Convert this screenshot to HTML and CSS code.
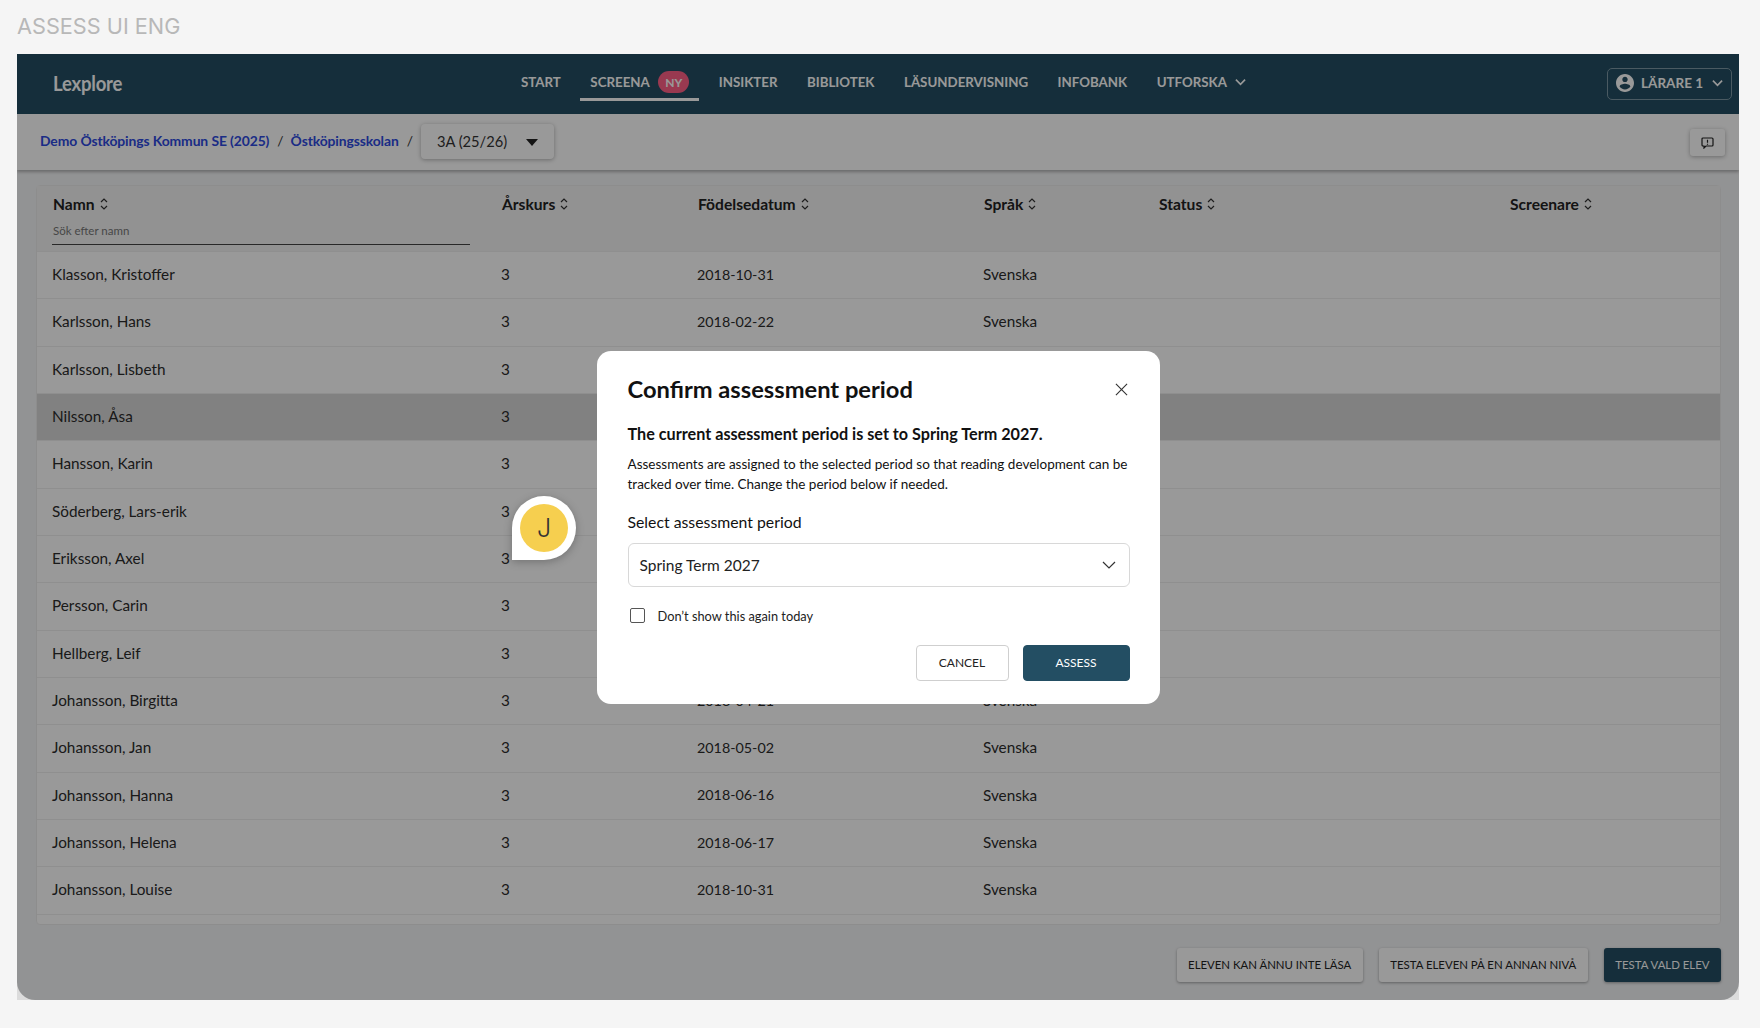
FILE: index.html
```html
<!DOCTYPE html>
<html lang="sv">
<head>
<meta charset="utf-8">
<title>Assess UI Eng</title>
<link rel="stylesheet" href="styles.css">
</head>
<body>
<header class="page-title">ASSESS UI ENG</header>
<div class="frame">
  <div class="app">
    <nav class="topbar">
      <div class="logo">Lexplore</div>
      <ul class="tabs">
        <li class="tab">START</li>
        <li class="tab tab-active">SCREENA <span class="badge">NY</span></li>
        <li class="tab">INSIKTER</li>
        <li class="tab">BIBLIOTEK</li>
        <li class="tab">LÄSUNDERVISNING</li>
        <li class="tab">INFOBANK</li>
        <li class="tab">UTFORSKA
          <svg class="tab-chev" viewBox="0 0 12 8"><path d="M1 1.5l5 5 5-5"/></svg>
        </li>
      </ul>
      <div class="user">
        <svg class="user-ic" viewBox="2 2 20 20"><path d="M12 2C6.48 2 2 6.48 2 12s4.48 10 10 10 10-4.48 10-10S17.52 2 12 2zm0 3c1.66 0 3 1.34 3 3s-1.34 3-3 3-3-1.34-3-3 1.34-3 3-3zm0 14.2c-2.5 0-4.71-1.28-6-3.22.03-1.99 4-3.08 6-3.08 1.99 0 5.97 1.09 6 3.08-1.29 1.94-3.5 3.22-6 3.22z"/></svg>
        <span>LÄRARE 1</span>
        <svg class="tab-chev" viewBox="0 0 12 8"><path d="M1 1.5l5 5 5-5"/></svg>
      </div>
    </nav>
    <div class="crumbs">
      <a class="crumb">Demo Östköpings Kommun SE (2025)</a>
      <span class="sep">/</span>
      <a class="crumb">Östköpingsskolan</a>
      <span class="sep">/</span>
      <div class="class-select"><span>3A (25/26)</span><i class="caret"></i></div>
      <button class="feedback">
        <svg viewBox="0 0 13 12"><path d="M2 1h9a1 1 0 0 1 1 1v6a1 1 0 0 1-1 1H5l-2 2V9H2a1 1 0 0 1-1-1V2a1 1 0 0 1 1-1z"/><path d="M6.5 2.8v3M6.5 6.7v1"/></svg>
      </button>
    </div>
    <main class="content">
      <section class="table">
        <div class="thead row-grid">
          <div class="th">
            <span class="th-label">Namn <svg class="sort" viewBox="0 0 8 14"><path d="M1 5l3-3 3 3M1 9l3 3 3-3"/></svg></span>
            <div class="search">Sök efter namn</div>
          </div>
          <div class="th"><span class="th-label">Årskurs <svg class="sort" viewBox="0 0 8 14"><path d="M1 5l3-3 3 3M1 9l3 3 3-3"/></svg></span></div>
          <div class="th"><span class="th-label">Födelsedatum <svg class="sort" viewBox="0 0 8 14"><path d="M1 5l3-3 3 3M1 9l3 3 3-3"/></svg></span></div>
          <div class="th"><span class="th-label">Språk <svg class="sort" viewBox="0 0 8 14"><path d="M1 5l3-3 3 3M1 9l3 3 3-3"/></svg></span></div>
          <div class="th"><span class="th-label">Status <svg class="sort" viewBox="0 0 8 14"><path d="M1 5l3-3 3 3M1 9l3 3 3-3"/></svg></span></div>
          <div class="th"><span class="th-label">Screenare <svg class="sort" viewBox="0 0 8 14"><path d="M1 5l3-3 3 3M1 9l3 3 3-3"/></svg></span></div>
        </div>
        <div class="tr row-grid"><div>Klasson, Kristoffer</div><div>3</div><div class="td-date">2018-10-31</div><div>Svenska</div></div>
        <div class="tr row-grid"><div>Karlsson, Hans</div><div>3</div><div class="td-date">2018-02-22</div><div>Svenska</div></div>
        <div class="tr row-grid"><div>Karlsson, Lisbeth</div><div>3</div><div></div><div></div></div>
        <div class="tr row-grid tr-selected"><div>Nilsson, Åsa</div><div>3</div><div></div><div></div></div>
        <div class="tr row-grid"><div>Hansson, Karin</div><div>3</div><div></div><div></div></div>
        <div class="tr row-grid"><div>Söderberg, Lars-erik</div><div>3</div><div></div><div></div></div>
        <div class="tr row-grid"><div>Eriksson, Axel</div><div>3</div><div></div><div></div></div>
        <div class="tr row-grid"><div>Persson, Carin</div><div>3</div><div></div><div></div></div>
        <div class="tr row-grid"><div>Hellberg, Leif</div><div>3</div><div></div><div></div></div>
        <div class="tr row-grid"><div>Johansson, Birgitta</div><div>3</div><div class="td-date">2018-04-21</div><div>Svenska</div></div>
        <div class="tr row-grid"><div>Johansson, Jan</div><div>3</div><div class="td-date">2018-05-02</div><div>Svenska</div></div>
        <div class="tr row-grid"><div>Johansson, Hanna</div><div>3</div><div class="td-date">2018-06-16</div><div>Svenska</div></div>
        <div class="tr row-grid"><div>Johansson, Helena</div><div>3</div><div class="td-date">2018-06-17</div><div>Svenska</div></div>
        <div class="tr row-grid"><div>Johansson, Louise</div><div>3</div><div class="td-date">2018-10-31</div><div>Svenska</div></div>
        <div class="tfoot"></div>
      </section>
      <div class="actions">
        <button class="act">ELEVEN KAN ÄNNU INTE LÄSA</button>
        <button class="act">TESTA ELEVEN PÅ EN ANNAN NIVÅ</button>
        <button class="act act-primary">TESTA VALD ELEV</button>
      </div>
    </main>
    <div class="backdrop">
      <div class="pin"><span class="pin-dot">J</span></div>
      <div class="modal">
        <div class="modal-head">
          <h2>Confirm assessment period</h2>
          <svg class="close" viewBox="0 0 14 14"><path d="M1 1l12 12M13 1L1 13"/></svg>
        </div>
        <p class="lead">The current assessment period is set to Spring Term 2027.</p>
        <p class="desc">Assessments are assigned to the selected period so that reading development can be tracked over time. Change the period below if needed.</p>
        <div class="field-label">Select assessment period</div>
        <div class="select">
          <span>Spring Term 2027</span>
          <svg viewBox="0 0 14 8"><path d="M1 1l6 6 6-6"/></svg>
        </div>
        <label class="check"><i class="box"></i><span>Don’t show this again today</span></label>
        <div class="modal-actions">
          <button class="btn">CANCEL</button>
          <button class="btn btn-primary">ASSESS</button>
        </div>
      </div>
    </div>
  </div>
</div>
</body>
</html>
```
FILE: styles.css
```css
* { box-sizing: border-box; }
html, body { margin: 0; padding: 0; }
body {
  background: #f5f5f5;
  font-family: "Lato", "Liberation Sans", sans-serif;
  color: #222;
  height: 1028px;
  overflow: hidden;
}
.page-title {
  height: 54px;
  padding: 14px 0 0 17px;
  font-size: 21.7px;
  line-height: 24px;
  color: #b8b8b8;
  font-family: "Inter", "Liberation Sans", sans-serif;
  font-weight: 400;
}
.frame {
  width: 1722px;
  height: 946px;
  margin-left: 17px;
  background: #dcdcdc;
}
.app {
  position: relative;
  height: 100%;
  background: #f4f5f7;
  border-radius: 0 0 18px 18px;
  overflow: hidden;
  display: flex;
  flex-direction: column;
}
.topbar {
  height: 60px;
  flex: none;
  background: #234e63;
  display: flex;
  align-items: center;
  color: #fff;
  padding: 0 7px 0 36px;
}
.logo {
  width: 70px;
  font-size: 18.5px;
  font-weight: 700;
  letter-spacing: -0.2px;
  margin-top: -2px;
  transform: scaleY(1.15);
}
.tabs {
  list-style: none;
  align-self: flex-start;
  margin: 0 0 0 388px;
  padding: 0;
  display: flex;
  align-items: center;
  gap: 9.5px;
  height: 56px;
}
.tab {
  display: flex;
  align-items: center;
  gap: 8.5px;
  height: 37px;
  padding: 0 10px;
  border-top: 3px solid transparent;
  border-bottom: 3px solid transparent;
  font-size: 13.3px;
  font-weight: 700;
}
.tab-active { border-bottom-color: #fff; }
.badge {
  width: 31px;
  height: 22px;
  border-radius: 11px;
  background: #ff5f86;
  display: flex;
  align-items: center;
  justify-content: center;
  font-size: 12px;
  font-weight: 700;
}
.tab-chev { width: 11px; height: 8px; fill: none; stroke: currentColor; stroke-width: 1.8; flex: none; }
.user {
  margin-left: auto;
  width: 125px;
  height: 32px;
  margin-top: -1px;
  padding: 0 8px 1px;
  border: 1px solid #7c96a3;
  border-radius: 5px;
  display: flex;
  align-items: center;
  gap: 7px;
  font-size: 13.5px;
  font-weight: 700;
  white-space: nowrap;
}
.user .tab-chev { margin-left: 2px; }
.user-ic { width: 18px; height: 18px; fill: currentColor; flex: none; }
.crumbs {
  height: 56px;
  flex: none;
  background: #fff;
  display: flex;
  align-items: center;
  padding: 0 14px 0 23px;
  box-shadow: 0 2px 3px rgba(0,0,0,.28);
  position: relative;
  font-size: 13.9px;
}
.crumb { color: #2d4ae0; font-weight: 700; letter-spacing: -0.1px; margin-top: -3px; }
.sep { margin: -3px 7px 0 8px; color: #333; }
.class-select {
  width: 133px;
  height: 35px;
  margin-left: 1px;
  margin-top: -1px;
  padding: 0 16px 2px;
  background: #fff;
  border-radius: 4px;
  box-shadow: 0 1px 4px rgba(0,0,0,.3);
  display: flex;
  align-items: center;
  justify-content: space-between;
  font-size: 14.7px;
  color: #333;
}
.caret {
  width: 0; height: 0;
  border-left: 6px solid transparent;
  border-right: 6px solid transparent;
  border-top: 7px solid #222;
  margin-top: 4px;
}
.feedback {
  margin-left: auto;
  width: 35px;
  height: 27px;
  margin-top: 1px;
  padding: 0;
  border: 0;
  border-radius: 3px;
  background: #fff;
  box-shadow: 0 1px 4px rgba(0,0,0,.3);
  display: flex;
  align-items: center;
  justify-content: center;
}
.feedback svg { width: 13px; height: 12px; fill: none; stroke: #222; stroke-width: 1.2; }
.content {
  flex: 1;
  padding: 15px 18px 0 19px;
  display: flex;
  flex-direction: column;
  min-height: 0;
}
.table {
  background: #fff;
  border: 1px solid #ececec;
  border-radius: 4px;
  flex: none;
}
.row-grid {
  display: grid;
  grid-template-columns: 449px 196px 286px 175px 351px 1fr;
  padding-left: 15px;
}
.thead {
  height: 65px;
  background: #f3f3f3;
  padding-top: 8px;
}
.th { padding-left: 1px; }
.th-label {
  display: inline-flex;
  align-items: center;
  gap: 5px;
  font-size: 15.6px;
  font-weight: 700;
  color: #222;
  height: 20px;
}
.sort { width: 8px; height: 14px; fill: none; stroke: #333; stroke-width: 1.2; }
.search {
  width: 418px;
  margin: 7px 0 0 -1px;
  padding: 0 0 2px 1px;
  height: 24px;
  border-bottom: 1.5px solid #444;
  font-size: 11.5px;
  line-height: 20px;
  color: #777;
}
.tr {
  height: 47.33px;
  align-items: center;
  border-top: 1px solid #eeeeee;
  font-size: 15.3px;
  color: #2c2c2c;
  padding-bottom: 2px;
}
.td-date { font-size: 14.3px; }
.tr-selected { background: #d8d8d8; }
.tfoot { height: 10px; border-top: 1px solid #eee; }
.actions {
  margin-top: 23px;
  display: flex;
  justify-content: flex-end;
  gap: 16px;
}
.act {
  height: 34px;
  padding: 0 11.5px;
  border: 0;
  border-radius: 3px;
  background: #fff;
  box-shadow: 0 1px 3px rgba(0,0,0,.35);
  font: 400 11.4px "Lato", "Liberation Sans", sans-serif;
  color: #222;
}
.act-primary {
  background: #234e63;
  color: #fff;
}
.backdrop {
  position: absolute;
  inset: 0;
  background: rgba(0,0,0,.4);
  display: flex;
  align-items: center;
  justify-content: center;
}
.modal {
  width: 563px;
  height: 353px;
  background: #fff;
  border-radius: 14px;
  padding: 19px 30px 0 31px;
  color: #111;
}
.modal-head {
  display: flex;
  align-items: center;
  justify-content: space-between;
  height: 38px;
  padding-right: 2px;
}
.modal-head h2 { margin: 0; font-size: 23.7px; font-weight: 700; }
.close { width: 13px; height: 13px; stroke: #333; fill: none; stroke-width: 1.2; margin-top: 2px; }
.lead { margin: 15px 0 0; font-size: 16.2px; line-height: 22px; font-weight: 700; }
.desc { margin: 9px 0 0; font-size: 13.5px; line-height: 20px; }
.field-label { margin-top: 17px; font-size: 15.8px; line-height: 22px; }
.select {
  margin-top: 10px;
  height: 44px;
  border: 1px solid #d8d8d8;
  border-radius: 6px;
  display: flex;
  align-items: center;
  justify-content: space-between;
  padding: 0 13px 0 11px;
  font-size: 15.5px;
  color: #222;
}
.select svg { width: 14px; height: 8px; fill: none; stroke: #333; stroke-width: 1.2; }
.check {
  display: flex;
  align-items: center;
  gap: 13px;
  margin: 21px 0 0 2px;
  font-size: 12.8px;
  height: 16px;
  color: #222;
}
.box { width: 15px; height: 15px; border: 1.5px solid #555; border-radius: 2px; flex: none; }
.modal-actions {
  margin-top: 21px;
  display: flex;
  justify-content: flex-end;
  gap: 14px;
}
.btn {
  width: 93px;
  height: 36px;
  border: 1px solid #cfcfcf;
  border-radius: 4px;
  background: #fff;
  color: #222;
  font: 400 12px "Lato", "Liberation Sans", sans-serif;
}
.btn-primary { width: 107px; background: #234e63; border-color: #234e63; color: #fff; }
.pin {
  position: absolute;
  left: 495px;
  top: 442px;
  width: 64px;
  height: 64px;
  background: #fff;
  border-radius: 50% 50% 50% 0;
  box-shadow: 0 2px 8px rgba(0,0,0,.25);
  display: flex;
  align-items: center;
  justify-content: center;
}
.pin-dot {
  width: 48px;
  height: 48px;
  border-radius: 50%;
  background: #f6cf4f;
  display: flex;
  align-items: center;
  justify-content: center;
  font-family: "Inter", "Liberation Sans", sans-serif;
  font-size: 25px;
  font-weight: 300;
  color: #333;
}
```
